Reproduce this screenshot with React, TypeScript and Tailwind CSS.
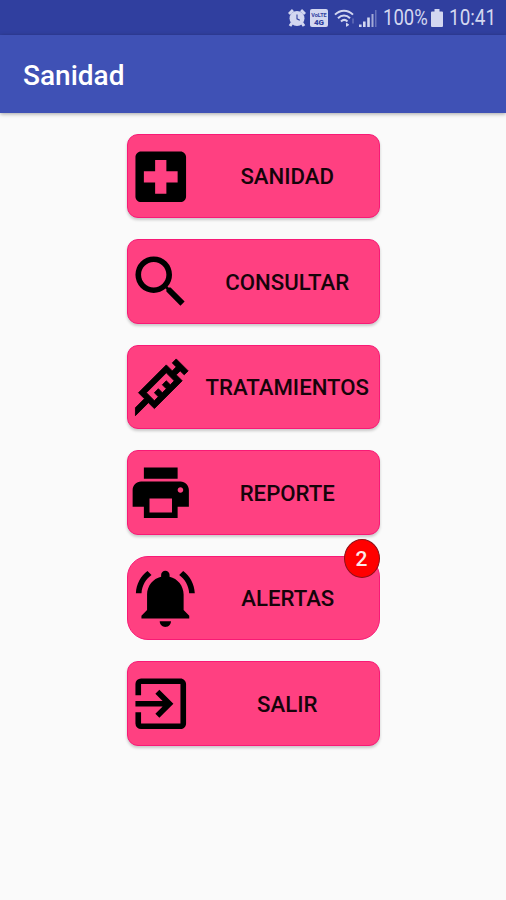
import React from "react";
import type { IconType } from "react-icons";
import { MdExitToApp, MdLocalHospital, MdPrint, MdSearch } from "react-icons/md";
import clsx from "clsx";

function NeedleIcon({ className }: { className?: string }) {
  return (
    <svg viewBox="0 0 24 24" fill="currentColor" stroke="currentColor" strokeWidth="0.3" className={className}>
      <path d="M11.15 15.18L9.73 13.77L11.15 12.35L12.56 13.77L13.97 12.35L12.56 10.94L13.97 9.53L15.39 10.94L16.8 9.53L13.97 6.7L6.9 13.77L9.73 16.6L11.15 15.18M3.08 19L6.2 15.89L4.08 13.77L13.97 3.87L16.1 6L17.5 4.58L16.1 3.16L17.5 1.75L21.75 6L20.34 7.4L18.92 6L17.5 7.4L19.63 9.53L9.73 19.42L7.61 17.3L3 21.92V19H3.08Z" />
    </svg>
  );
}

function BellIcon({ className }: { className?: string }) {
  return (
    <svg viewBox="0 0 24 24" fill="currentColor" className={className}>
      <path d="M6.58 3.58L5.15 2.15C2.76 3.97 1.18 6.8 1.03 10h2c.15-2.65 1.51-4.97 3.55-6.42z" />
      <path d="M19.97 10h2c-.15-3.2-1.73-6.03-4.13-7.85l-1.42 1.43c2.02 1.45 3.39 3.77 3.55 6.42z" />
      <path d="M18 10.5c0-3.07-2.13-5.64-5-6.32V3.5c0-.83-.67-1.5-1.5-1.5S10 2.67 10 3.5v.68c-2.87.68-5 3.25-5 6.32V16l-2 2v1h17v-1l-2-2v-5.5z" />
      <path d="M11.5 22c.14 0 .27-.01.4-.04.65-.13 1.19-.58 1.44-1.18.1-.24.16-.5.16-.78h-4c0 1.1.9 2 2 2z" />
    </svg>
  );
}

interface MenuItem {
  label: string;
  icon: IconType | typeof NeedleIcon;
  count?: number;
}

const items: MenuItem[] = [
  { label: "SANIDAD", icon: MdLocalHospital },
  { label: "CONSULTAR", icon: MdSearch },
  { label: "TRATAMIENTOS", icon: NeedleIcon },
  { label: "REPORTE", icon: MdPrint },
  { label: "ALERTAS", icon: BellIcon, count: 2 },
  { label: "SALIR", icon: MdExitToApp },
];

function StatusBar() {
  return (
    <div className="flex h-[35px] items-center justify-end bg-[#303f9f] pr-[11px] text-[#d3d7f0]">
      {/* Alarm */}
      <svg viewBox="0 0 18 18" className="mr-[4px] h-[18px] w-[18px]" fill="currentColor">
        <circle cx="9" cy="9.5" r="7.5" />
        <path d="M1 5L5 1.2M17 5L13 1.2M4 14L2 17M14 14L16 17" stroke="currentColor" strokeWidth="3" />
        <path d="M9 5.5v4.3l2.8 1.4" fill="none" stroke="#303f9f" strokeWidth="1.1" />
      </svg>
      {/* VoLTE / 4G */}
      <svg viewBox="0 0 18 18" className="mr-[6px] h-[18px] w-[18px]">
        <rect width="18" height="18" rx="2" fill="currentColor" />
        <text x="9" y="7.5" textAnchor="middle" fontSize="5.5" fontWeight="700" fontFamily="Roboto" fill="#303f9f">VoLTE</text>
        <text x="9" y="16.2" textAnchor="middle" fontSize="8" fontWeight="900" fontFamily="Roboto" fill="#303f9f">4G</text>
      </svg>
      {/* Wi-Fi */}
      <svg viewBox="0 0 22 18" className="mr-[3px] h-[18px] w-[22px]" fill="none" stroke="currentColor" strokeWidth="2">
        <path d="M1 5.6C6.2.3 13.8.3 19 5.6M4 9.2c3.5-3.5 8.5-3.5 12 0M7 12.5c2-2 4.5-2 6.5 0" />
        <path d="M12.5 14.3l2.2 1.5-2.2 1.5z" fill="currentColor" strokeWidth="1" />
        <path d="M19 9.5v5" strokeWidth="1.6" opacity=".3" />
      </svg>
      {/* Signal */}
      <svg viewBox="0 0 18 18" className="mr-[6px] h-[18px] w-[18px]" fill="currentColor">
        <path d="M0 15.5h2.6V18H0zM4 12.5h2.6V18H4zM8.2 8.5h2.6V18H8.2z" />
        <path d="M12.5 5h2v13h-2z" opacity=".7" />
        <path d="M16 1h1.5v17H16z" opacity=".35" />
      </svg>
      <div className="w-[45px]">
        <span className="inline-block origin-left scale-x-[0.84] text-[22px] leading-[35px]">100%</span>
      </div>
      <svg viewBox="0 0 12 18" className="mr-[6px] ml-[3px] h-[18px] w-[12px]" fill="currentColor">
        <path d="M3.5 0h5v2.5H11a1 1 0 0 1 1 1V17a1 1 0 0 1-1 1H1a1 1 0 0 1-1-1V3.5a1 1 0 0 1 1-1h2.5z" />
      </svg>
      <div className="w-[46px]">
        <span className="inline-block origin-left scale-x-[0.86] text-[22px] leading-[35px]">10:41</span>
      </div>
    </div>
  );
}

function MenuButton({ label, icon: Icon, count }: MenuItem) {
  const hasBadge = count !== undefined;
  return (
    <button
      className={clsx(
        "relative flex h-[84.5px] w-[253px] items-center border border-[#f81a76] bg-[#ff4081] text-black",
        hasBadge ? "rounded-[21px] pl-[5px]" : "rounded-[11px] shadow-[0_2px_3px_rgba(0,0,0,0.2)]"
      )}
    >
      <Icon className={clsx("mt-px h-[67.5px] w-[67.5px] shrink-0", hasBadge ? "-mr-[5px]" : "-ml-px")} />
      <span className="flex-1 pt-[2px] pl-[2px] text-center text-[22.2px] font-medium whitespace-nowrap text-[#16040a]">
        {label}
      </span>
      {hasBadge && (
        <span className="absolute -top-[18px] -right-[1px] flex h-[39px] w-[36px] items-center justify-center rounded-[50%] border border-[#8f1018] bg-[#ff0000] pt-[2px] text-[21px] font-medium text-[#fbe9e9]">
          {count}
        </span>
      )}
    </button>
  );
}

export default function App() {
  return (
    <div className="flex h-[900px] w-[506px] flex-col overflow-hidden bg-[#fafafa] font-['Roboto',sans-serif]">
      <StatusBar />
      <header className="flex h-[78px] shrink-0 items-center bg-[#3f51b5] px-[23px] pt-[3px] shadow-[0_1px_4px_rgba(0,0,0,0.35)]">
        <h1 className="text-[28px] font-medium text-white">Sanidad</h1>
      </header>
      <main className="flex flex-col items-center gap-[21px] pt-[20.9px]">
        {items.map((item) => (
          <MenuButton key={item.label} {...item} />
        ))}
      </main>
    </div>
  );
}
